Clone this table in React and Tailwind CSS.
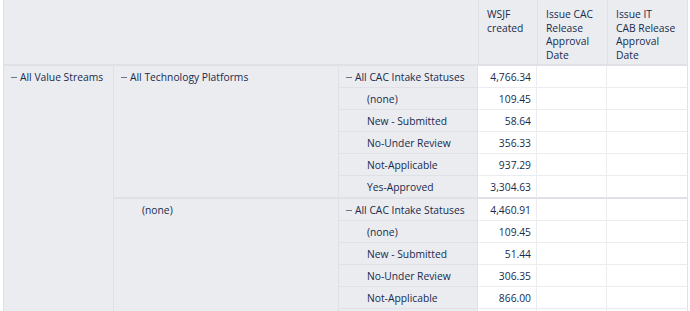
import React from "react";

const groups = [
  {
    platform: "All Technology Platforms",
    platformTotal: true,
    rows: [
      { label: "All CAC Intake Statuses", value: "4,766.34", total: true },
      { label: "(none)", value: "109.45" },
      { label: "New - Submitted", value: "58.64" },
      { label: "No-Under Review", value: "356.33" },
      { label: "Not-Applicable", value: "937.29" },
      { label: "Yes-Approved", value: "3,304.63" },
    ],
  },
  {
    platform: "(none)",
    platformTotal: false,
    rows: [
      { label: "All CAC Intake Statuses", value: "4,460.91", total: true },
      { label: "(none)", value: "109.45" },
      { label: "New - Submitted", value: "51.44" },
      { label: "No-Under Review", value: "306.35" },
      { label: "Not-Applicable", value: "866.00" },
      { label: "", value: "" },
    ],
  },
];

function Minus() {
  return <span className="inline-block w-[6px] h-px bg-[#6b778c] align-middle mr-[3px] mb-[2px]" />;
}

function Label({ text, total }) {
  if (total) {
    return (
      <div className="h-[21px] leading-[23px] pl-[7px] whitespace-nowrap">
        <Minus />
        {text}
      </div>
    );
  }
  return <div className="h-[21px] leading-[23px] pl-[28px] whitespace-nowrap">{text}</div>;
}

function HeadCell({ lines, last }) {
  return (
    <th
      className={
        "border-l border-b-2 border-[#dfe1e6] font-normal text-left align-top p-0 " +
        (last ? "border-r" : "")
      }
    >
      <div className="h-[64px] overflow-hidden pl-[8px] pt-[8px] leading-[13.7px] whitespace-nowrap">
        {lines.map((l) => (
          <div key={l}>{l}</div>
        ))}
      </div>
    </th>
  );
}

export default function App() {
  const rowCount = groups.reduce((n, g) => n + g.rows.length, 0);

  return (
    <div
      className="w-[690px] h-[311px] overflow-hidden bg-white pl-[3px] text-[10.3px] text-[#172b4d]"
      style={{ fontFamily: '"Open Sans", "Noto Sans", sans-serif' }}
    >
      <table className="border-separate border-spacing-0 table-fixed w-[685px]">
        <colgroup>
          <col className="w-[111px]" />
          <col className="w-[225px]" />
          <col className="w-[139px]" />
          <col className="w-[59px]" />
          <col className="w-[70px]" />
          <col className="w-[81px]" />
        </colgroup>
        <thead>
          <tr className="bg-[#ebecf0]">
            <th colSpan={3} className="border-l border-[#dfe1e6] border-b-2 p-0"></th>
            <HeadCell lines={["WSJF", "created"]} />
            <HeadCell lines={["Issue CAC", "Release", "Approval", "Date"]} />
            <HeadCell lines={["Issue IT", "CAB Release", "Approval", "Date"]} last />
          </tr>
        </thead>
        <tbody>
          {groups.map((g, gi) =>
            g.rows.map((r, ri) => {
              const groupEnd = ri === g.rows.length - 1 && gi < groups.length - 1;
              const bottom = groupEnd ? "border-b-2 border-b-[#dfe1e6]" : "border-b";
              return (
                <tr key={gi + "-" + ri}>
                  {gi === 0 && ri === 0 && (
                    <td
                      rowSpan={rowCount}
                      className="align-top bg-[#ebecf0] border-l border-r border-[#dfe1e6] p-0"
                    >
                      <Label text="All Value Streams" total />
                    </td>
                  )}
                  {ri === 0 && (
                    <td
                      rowSpan={g.rows.length}
                      className="align-top bg-[#ebecf0] border-r border-b-2 border-[#dfe1e6] p-0"
                    >
                      <Label text={g.platform} total={g.platformTotal} />
                    </td>
                  )}
                  <td className={"align-top bg-[#ebecf0] border-r border-[#dfe1e6] p-0 " + bottom}>
                    <Label text={r.label} total={r.total} />
                  </td>
                  <td className={"align-top p-0 border-r border-[#ebecf0] " + bottom}>
                    <div className="h-[21px] leading-[23px] text-right pr-[5px]">{r.value}</div>
                  </td>
                  <td className={"p-0 border-r border-[#ebecf0] " + bottom}></td>
                  <td className={"p-0 border-r border-r-[#dfe1e6] border-[#ebecf0] " + bottom}></td>
                </tr>
              );
            })
          )}
        </tbody>
      </table>
    </div>
  );
}
